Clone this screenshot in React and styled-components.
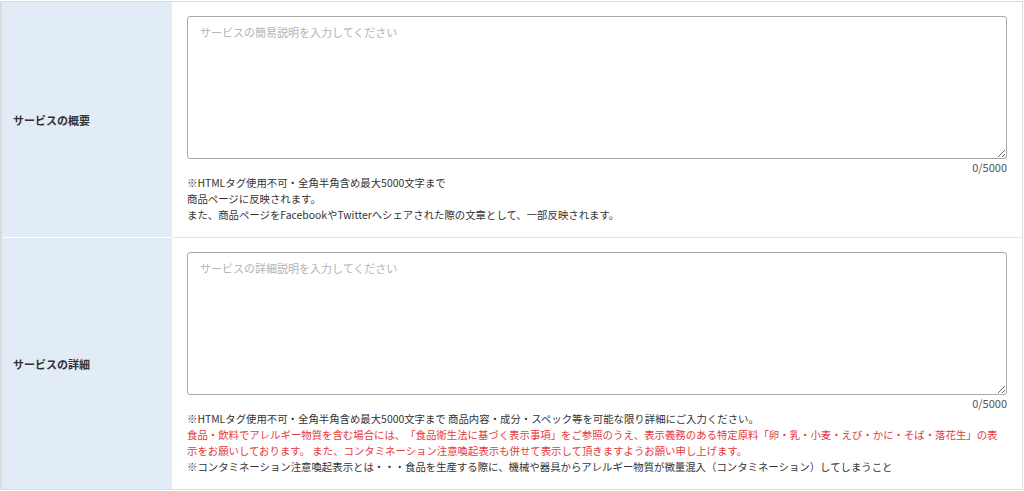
import React from 'react';
import styled, { createGlobalStyle } from 'styled-components';

const GlobalStyle = createGlobalStyle`
  html, body {
    margin: 0;
    padding: 0;
    background: #fff;
  }
  body {
    font-family: 'Noto Sans CJK JP', 'Noto Sans', sans-serif;
    color: #333;
    text-spacing-trim: space-all;
  }
`;

const rows = [
  {
    id: 'summary',
    label: 'サービスの概要',
    placeholder: 'サービスの簡易説明を入力してください',
    notes: [
      { text: '※HTMLタグ使用不可・全角半角含め最大5000文字まで' },
      { text: '商品ページに反映されます。' },
      {
        text: 'また、商品ページをFacebookやTwitterへシェアされた際の文章として、一部反映されます。',
      },
    ],
  },
  {
    id: 'detail',
    label: 'サービスの詳細',
    placeholder: 'サービスの詳細説明を入力してください',
    notes: [
      {
        text: '※HTMLタグ使用不可・全角半角含め最大5000文字まで 商品内容・成分・スペック等を可能な限り詳細にご入力ください。',
      },
      {
        text: '食品・飲料でアレルギー物質を含む場合には、「食品衛生法に基づく表示事項」をご参照のうえ、表示義務のある特定原料「卵・乳・小麦・えび・かに・そば・落花生」の表示をお願いしております。 また、コンタミネーション注意喚起表示も併せて表示して頂きますようお願い申し上げます。',
        warn: true,
      },
      {
        text: '※コンタミネーション注意喚起表示とは・・・食品を生産する際に、機械や器具からアレルギー物質が微量混入（コンタミネーション）してしまうこと',
      },
    ],
  },
];

const App = () => {
  return (
    <>
      <GlobalStyle />
      <Page>
        <Table>
          {rows.map(row => (
            <Row key={row.id}>
              <Label>{row.label}</Label>
              <Field>
                <TextArea placeholder={row.placeholder} />
                <Counter>0/5000</Counter>
                <Notes>
                  {row.notes.map((note, i) => (
                    <Note key={i} $warn={note.warn}>
                      {note.text}
                    </Note>
                  ))}
                </Notes>
              </Field>
            </Row>
          ))}
        </Table>
      </Page>
    </>
  );
};

const Page = styled.div`
  padding-top: 1px;
  width: 1023px;
`;

const Table = styled.div`
  border: 1px solid #dcdcdc;
  border-left: 2px solid #dcdcdc;
  display: flex;
  flex-direction: column;
`;

const Row = styled.div`
  display: grid;
  grid-template-columns: 170px 1fr;
  & + & {
    border-top: 1px solid #e4e4e4;
  }
  & + & > div:first-child {
    box-shadow: 0 -1px 0 #fff;
  }
`;

const Label = styled.div`
  background-color: #e2ecf6;
  display: flex;
  align-items: center;
  padding: 0 11px;
  font-size: 11px;
  font-weight: 700;
  color: #333;
`;

const Field = styled.div`
  padding: 14px 15px 14px 15px;
  display: flex;
  flex-direction: column;
`;

const TextArea = styled.textarea`
  display: block;
  box-sizing: border-box;
  width: 100%;
  height: 143px;
  margin: 0;
  padding: 7px 12px;
  border: 1px solid #a9a9a9;
  border-radius: 3px;
  font-family: 'Noto Sans CJK JP', 'Noto Sans', sans-serif;
  font-size: 11px;
  line-height: 16px;
  color: #333;
  resize: vertical;
  outline: none;

  &::placeholder {
    color: #b3b3b3;
  }
`;

const Counter = styled.div`
  text-align: right;
  font-size: 11px;
  line-height: 16px;
  color: #555;
`;

const Notes = styled.div`
  display: flex;
  flex-direction: column;
`;

const Note = styled.p`
  margin: 0;
  font-size: 10.4px;
  line-height: 16px;
  color: ${props => (props.$warn ? '#e5393c' : '#333')};
`;

export default App;
